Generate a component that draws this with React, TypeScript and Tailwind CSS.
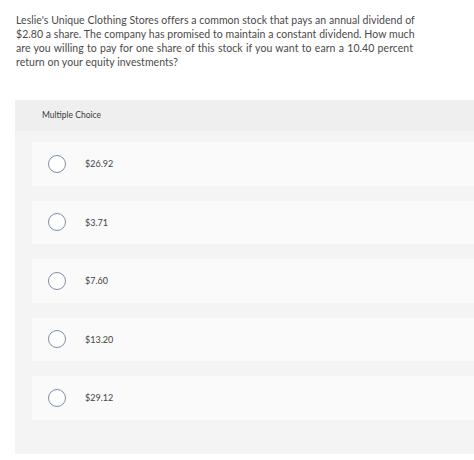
const choices = ["$26.92", "$3.71", "$7.60", "$13.20", "$29.12"];

const lines = [
  "Leslie's Unique Clothing Stores offers a common stock that pays an annual dividend of",
  "$2.80 a share. The company has promised to maintain a constant dividend. How much",
  "are you willing to pay for one share of this stock if you want to earn a 10.40 percent",
];

export default function App() {
  return (
    <div className="w-[474px] h-[460px] bg-white text-[#333] font-['Lato','Liberation_Sans',sans-serif] overflow-hidden">
      <div className="ml-[16px] w-[397px] pt-[13px] text-[10.5px] leading-[14px] tracking-[0.05px] text-[#4a4a4a]">
        {lines.map((l) => (
          <p key={l} className="whitespace-nowrap text-justify [text-align-last:justify]">
            {l}
          </p>
        ))}
        <p>return on your equity investments?</p>
      </div>

      <div className="ml-[15px] mt-[31px] h-[354px] bg-[#f4f4f4] flex flex-col">
        <div className="h-[31px] bg-[#efefef] flex items-center pl-[27px] text-[8.5px] text-[#3a3a3a]">
          Multiple Choice
        </div>
        <div className="flex flex-col gap-[15px] pt-[11px] pl-[17px]">
          {choices.map((c) => (
            <div key={c} className="h-[43.5px] bg-[#fafafa] flex items-center">
              <span className="ml-[16px] w-[18px] h-[18px] rounded-full border border-[#7d8fa6] bg-white" />
              <span className="ml-[19px] text-[9px] text-[#444]">{c}</span>
            </div>
          ))}
        </div>
      </div>
    </div>
  );
}
